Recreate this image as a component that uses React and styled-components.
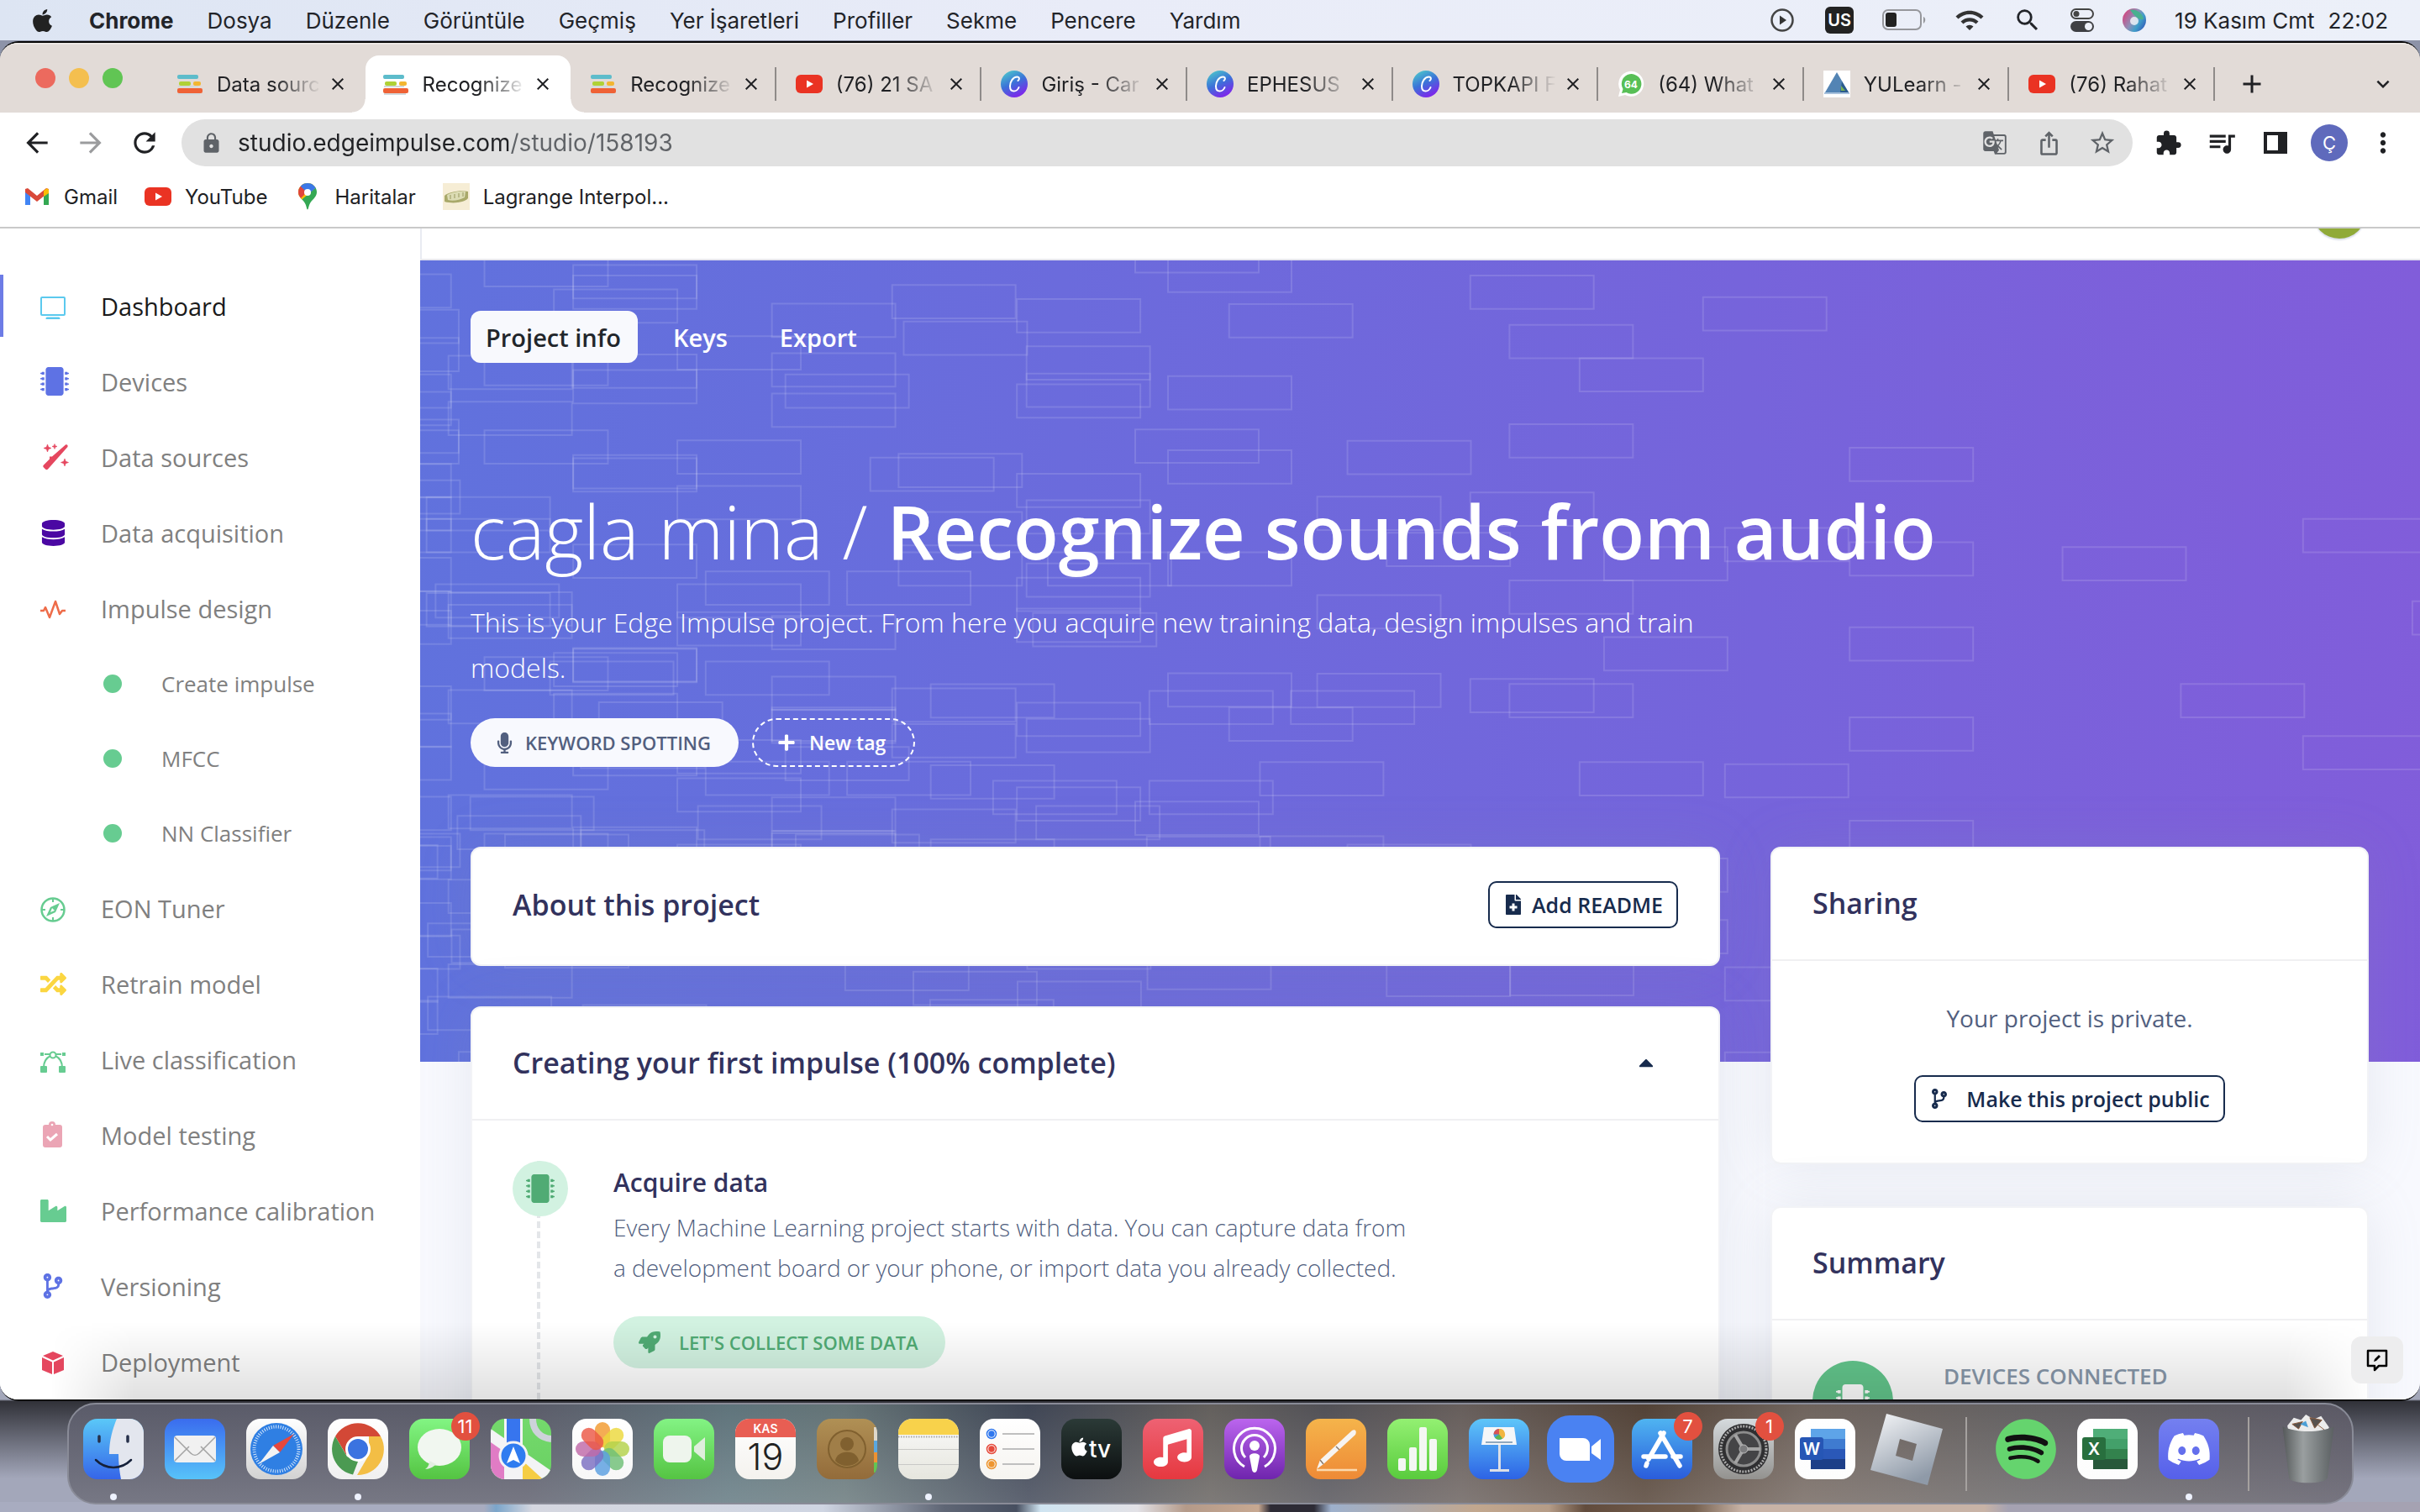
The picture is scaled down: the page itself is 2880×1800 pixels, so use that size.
import React from "react";
import styled, { createGlobalStyle, css } from "styled-components";
import {
  MdArrowBack, MdArrowForward, MdRefresh, MdLock, MdGTranslate, MdIosShare, MdStarOutline,
  MdExtension, MdQueueMusic, MdMoreVert, MdClose, MdAdd, MdKeyboardArrowDown, MdWifi, MdSearch,
} from "react-icons/md";
import {
  FaApple, FaMicrochip, FaDatabase, FaRandom, FaIndustry, FaCodeBranch, FaMicrophone,
  FaPlus, FaFileMedical, FaRocket, FaSpotify, FaDiscord, FaMusic, FaCaretUp,
} from "react-icons/fa";

const systemFont = `Inter, Roboto, "Liberation Sans", sans-serif`;
const appFont = `"Open Sans", "Noto Sans", sans-serif`;

const GlobalStyle = createGlobalStyle`
  *, *::before, *::after { box-sizing: border-box; }
  html, body, #root { height: 100%; }
  body { margin: 0; overflow: hidden; font-family: ${systemFont}; color: #202124; }
  button { font: inherit; color: inherit; border: 0; padding: 0; background: none; }
  a { color: inherit; text-decoration: none; }
  h1, h2, h3, p, ul { margin: 0; padding: 0; }
  svg { display: block; flex: none; }
`;

/* ---------- desktop ---------- */

const Desktop = styled.div`
  height: 100%;
  display: flex;
  flex-direction: column;
  background:
    linear-gradient(90deg, #8d93a8, #8d93a8) 0 0 / 100% 100px no-repeat,
    linear-gradient(180deg, transparent calc(100% - 134px), rgba(20, 20, 24, 0.8) calc(100% - 132px), transparent calc(100% - 40px)),
    #a3a7ba;
`;

const MenuBar = styled.header`
  flex: none;
  height: 48px;
  padding: 0 38px 0 35px;
  display: flex;
  align-items: center;
  justify-content: space-between;
  background: linear-gradient(90deg, #dde5f3, #e9ecf8 45%, #ecf0f9);
  font-size: 26px;
  color: #222429;
`;

const MenuGroup = styled.nav`
  display: flex;
  align-items: center;
  gap: 40px;
`;

const MenuItem = styled.button`
  font-weight: ${(p) => (p.$bold ? 700 : 400)};
`;

const StatusGroup = styled.div`
  display: flex;
  align-items: center;
  gap: 34px;
`;

const InputSource = styled.span`
  width: 34px;
  height: 32px;
  border-radius: 6px;
  background: #222;
  color: #fff;
  font-size: 20px;
  font-weight: 600;
  line-height: 32px;
  text-align: center;
`;

const Clock = styled.time`
  display: flex;
  gap: 16px;
`;

/* ---------- browser window ---------- */

const Window = styled.main`
  flex: 1;
  min-height: 0;
  margin-top: 1px;
  display: flex;
  flex-direction: column;
  border-top: 2px solid #050505;
  border-bottom: 2px solid #111;
  border-radius: 22px;
  overflow: hidden;
  background: #fff;
  position: relative;

  &::after {
    content: "";
    position: absolute;
    left: 60px;
    right: 60px;
    bottom: 0;
    height: 92px;
    pointer-events: none;
    background: linear-gradient(180deg, rgba(0, 0, 0, 0), rgba(0, 0, 0, 0.12));
    mask-image: linear-gradient(90deg, transparent, #000 100px, #000 calc(100% - 100px), transparent);
  }
`;

const TabStrip = styled.div`
  flex: none;
  height: 83px;
  display: flex;
  align-items: flex-end;
  background: #e2dbd7;
  border-top: 2px solid #ece7e4;
`;

const Lights = styled.div`
  flex: none;
  width: 190px;
  height: 68px;
  padding: 15px 0 0 42px;
  display: flex;
  gap: 16px;
`;

const Light = styled.button`
  width: 24px;
  height: 24px;
  border-radius: 50%;
  background: ${(p) => p.$color};
`;

const Tabs = styled.div`
  flex: 0 1 2446px;
  min-width: 0;
  display: flex;
`;

const Tab = styled.div`
  flex: 1 1 0;
  min-width: 0;
  height: 68px;
  padding: 0 21px 0 20px;
  display: flex;
  align-items: center;
  gap: 16px;
  position: relative;
  font-size: 24px;
  ${(p) => p.$separated && css`
    padding: 0 18px 0 23px;
    background: linear-gradient(#8f8b89, #8f8b89) right center / 2px 40px no-repeat;
  `}
  ${(p) => p.$active && css`
    background: #fff;
    border-radius: 16px 16px 0 0;
    &::before, &::after {
      content: "";
      position: absolute;
      bottom: 0;
      width: 16px;
      height: 16px;
    }
    &::before { left: -16px; background: radial-gradient(circle at 0 0, transparent 15px, #fff 16px); }
    &::after { right: -16px; background: radial-gradient(circle at 100% 0, transparent 15px, #fff 16px); }
  `}
`;

const TabTitle = styled.span`
  flex: 1;
  min-width: 0;
  margin-right: -8px;
  white-space: nowrap;
  mask-image: linear-gradient(90deg, #000 55%, transparent);
`;

const IconButton = styled.button`
  flex: none;
  width: ${(p) => p.$width || 64}px;
  display: grid;
  place-items: center;
  color: ${(p) => p.$color || "#202124"};
`;

const StripEnd = styled.div`
  flex: 1 0 auto;
  height: 68px;
  padding: 0 12px;
  display: flex;
  align-items: center;
  justify-content: space-between;
`;

const Toolbar = styled.div`
  flex: none;
  padding: 8px 12px;
  display: flex;
  align-items: center;
`;

const Omnibox = styled.div`
  flex: 1;
  height: 56px;
  margin: 0 10px 0 12px;
  padding: 0 4px 0 22px;
  display: flex;
  align-items: center;
  border-radius: 28px;
  background: #e1e1e1;
`;

const Address = styled.input`
  flex: 1;
  min-width: 0;
  margin-left: 18px;
  padding: 0;
  border: 0;
  outline: 0;
  font-family: ${systemFont};
  font-size: 28px;
  background: linear-gradient(90deg, #202124 322px, #606367 322px);
  background-clip: text;
  -webkit-text-fill-color: transparent;
`;

const Profile = styled.span`
  width: 44px;
  height: 44px;
  border-radius: 50%;
  background: #5f6abc;
  color: #fff;
  font-size: 22px;
  line-height: 44px;
  text-align: center;
`;

const Bookmarks = styled.nav`
  flex: none;
  height: 66px;
  padding: 0 28px 8px;
  display: flex;
  align-items: center;
  gap: 32px;
  border-bottom: 2px solid #c9c9c9;
  font-size: 24px;
`;

const Bookmark = styled.a`
  display: flex;
  align-items: center;
  gap: 16px;
`;

/* ---------- studio page ---------- */

const Studio = styled.div`
  flex: 1;
  min-height: 0;
  display: flex;
  font-family: ${appFont};
  color: #525f7f;
  background: #f8f9fe;
`;

const Sidebar = styled.nav`
  flex: none;
  width: 500px;
  padding-top: 47px;
  overflow: hidden;
  background: #fff;
`;

const NavLink = styled.a`
  height: ${(p) => (p.$sub ? 89 : 90)}px;
  padding-left: ${(p) => (p.$sub ? 123 : 48)}px;
  display: flex;
  align-items: center;
  font-size: ${(p) => (p.$sub ? 26 : 29)}px;
  color: ${(p) => (p.$active ? "#1a1a1a" : "#808080")};
  ${(p) => p.$active && css`
    background: linear-gradient(#6d7ce6, #6d7ce6) 0 center / 4px 74px no-repeat;
  `}
`;

const NavIcon = styled.span`
  width: ${(p) => (p.$sub ? 69 : 72)}px;
  color: ${(p) => p.$color};
`;

const Dot = styled.span`
  display: block;
  width: 22px;
  height: 22px;
  border-radius: 50%;
  background: #67cc91;
`;

const Page = styled.div`
  flex: 1;
  min-width: 0;
  overflow: hidden;
  position: relative;
`;

const TopBar = styled.div`
  height: 38px;
  padding: 0 64px 24px;
  display: flex;
  align-items: flex-end;
  justify-content: flex-end;
  overflow: hidden;
  background: #fff;
  border-left: 2px solid #e9ebf2;
  border-bottom: 2px solid #e7e7ef;
`;

const UserBadge = styled.span`
  flex: none;
  width: 64px;
  height: 64px;
  border-radius: 50%;
  background: #90aa38;
  box-shadow: 0 2px 2px #d8dce8;
`;

const Hero = styled.section`
  height: 954px;
  padding: 60px 60px 0;
  position: relative;
  isolation: isolate;
  color: #fff;
  background: linear-gradient(87deg, #6072dd, #815dda);
`;

const Pattern = styled.svg`
  position: absolute;
  inset: 0;
  z-index: -1;
  width: 100%;
  height: 100%;
`;

const HeroTabs = styled.div`
  display: flex;
  gap: 24px;
`;

const HeroTab = styled.button`
  height: 62px;
  padding: 0 20px 0 18px;
  border-radius: 12px;
  font-size: 29px;
  font-weight: 600;
  ${(p) => p.$active && css`
    background: #f8f9fd;
    color: #22262b;
  `}
`;

const HeroTitle = styled.h1`
  margin-top: 143px;
  font-size: 88px;
  font-weight: 600;
  line-height: 114px;
  white-space: nowrap;
`;

const Owner = styled.span`
  font-weight: 300;
`;

const HeroText = styled.p`
  max-width: 1490px;
  margin-top: 25px;
  font-size: 32px;
  font-weight: 300;
  line-height: 54px;
`;

const Tags = styled.div`
  margin-top: 33px;
  display: flex;
  gap: 16px;
`;

const Tag = styled.button`
  height: 58px;
  padding: 0 33px 0 28px;
  display: flex;
  align-items: center;
  gap: ${(p) => (p.$dashed ? 16 : 12)}px;
  border-radius: 29px;
  font-size: ${(p) => (p.$dashed ? 23 : 22)}px;
  font-weight: 600;
  background: ${(p) => (p.$dashed ? "none" : "#f8f9fe")};
  border: ${(p) => (p.$dashed ? "2px dashed #fff" : "0")};
  color: ${(p) => (p.$dashed ? "#fff" : "#525f7f")};
`;

const Columns = styled.div`
  margin-top: -256px;
  padding: 0 61px 0 60px;
  position: relative;
  display: grid;
  grid-template-columns: minmax(0, 1fr) 712px;
  gap: 60px;
  align-items: start;
`;

const Stack = styled.div`
  display: flex;
  flex-direction: column;
  gap: ${(p) => p.$gap}px;
`;

const Card = styled.section`
  background: #fff;
  border: 2px solid #f2f3f6;
  border-radius: 12px;
  box-shadow: 0 0 64px rgba(136, 152, 170, 0.16);
`;

const CardHeader = styled.header`
  height: ${(p) => (p.$plain ? 138 : 134)}px;
  padding: 0 48px ${(p) => (p.$plain ? 4 : 2)}px;
  display: flex;
  align-items: center;
  justify-content: space-between;
  border-bottom: ${(p) => (p.$plain ? 0 : 2)}px solid #f0f0f2;
`;

const CardTitle = styled.h2`
  font-size: 34px;
  font-weight: 600;
  color: #32325d;
`;

const OutlineButton = styled.button`
  height: 56px;
  padding: 0 16px;
  display: flex;
  align-items: center;
  gap: ${(p) => p.$gap || 10}px;
  border: 2px solid #172b4d;
  border-radius: 10px;
  font-size: 25px;
  font-weight: 600;
  line-height: 34px;
  color: #172b4d;
`;

const Toggle = styled.button`
  margin-right: 24px;
  color: #172b4d;
`;

const Step = styled.div`
  height: 460px;
  padding: 48px 48px 0;
  display: flex;
  gap: 54px;
`;

const Timeline = styled.div`
  width: 66px;
  background: repeating-linear-gradient(180deg, #e4e6e9 0 8px, transparent 8px 12px) 29px 0 / 4px 100% no-repeat;
`;

const StepIcon = styled.span`
  width: 66px;
  height: 66px;
  display: grid;
  place-items: center;
  border-radius: 50%;
  background: #d2f2e1;
  color: #50ab74;
`;

const StepBody = styled.div`
  max-width: 955px;
  padding-top: 6px;
`;

const StepTitle = styled.h3`
  font-size: 30px;
  font-weight: 600;
  line-height: 40px;
  color: #32325d;
`;

const StepText = styled.p`
  margin-top: 9px;
  font-size: 28px;
  font-weight: 300;
  line-height: 48px;
`;

const PillLink = styled.a`
  width: max-content;
  height: 62px;
  margin-top: 34px;
  padding: 0 32px 0 30px;
  display: flex;
  align-items: center;
  gap: 22px;
  border-radius: 31px;
  font-size: 22px;
  font-weight: 600;
  background: #d2f2e1;
  color: #50ab74;
`;

const Sharing = styled.div`
  padding: 44px 48px 48px;
  display: flex;
  flex-direction: column;
  align-items: center;
  gap: 44px;
  font-size: 28px;
  line-height: 48px;
`;

const SummaryRow = styled.div`
  height: 220px;
  padding: 48px;
  display: flex;
  gap: 60px;
`;

const SummaryIcon = styled.span`
  width: 96px;
  height: 96px;
  display: grid;
  place-items: center;
  border-radius: 50%;
  background: #63c68c;
  color: #fff;
`;

const SummaryLabel = styled.h3`
  font-size: 26px;
  font-weight: 600;
  line-height: 36px;
  color: #8898aa;
`;

const Feedback = styled.button`
  position: absolute;
  right: 20px;
  bottom: 19px;
  z-index: 2;
  width: 62px;
  height: 56px;
  display: grid;
  place-items: center;
  border-radius: 12px;
  background: #ededee;
  color: #000;
`;

/* ---------- dock ---------- */

const DockArea = styled.footer`
  flex: none;
  padding: 2px 40px 0;
  display: flex;
  justify-content: center;
  background: linear-gradient(90deg,
    #a8acc0 20%, #7ba5ca 20.5%, #d5d7e0 22%, #cfd5e2 34%, #5f6675 39%, #474f60 42%, #cfe4f1 43%, #e2e1e6 47%,
    #b49a89 49%, #c7a891 52%, #2d2b35 52.5%, #2d2b35 54.3%, #9db0cc 55%, #c2a78e 61%, #b59c87 64%, #624c3d 65.5%,
    #75604f 70%, #c8b3a6 72%, #c8b3a6 82%, #a5a2b2 83%) 0 100% / 100% 12px no-repeat;
`;

const Dock = styled.div`
  height: 121px;
  margin-bottom: 9px;
  padding: 0 16px 0 17px;
  display: flex;
  align-items: center;
  gap: 25px;
  border: 2px solid #898b97;
  border-radius: 34px;
  background:
    linear-gradient(180deg, rgba(0, 0, 0, 0.06), rgba(255, 255, 255, 0.14)),
    linear-gradient(90deg, #606170, #60616f 20%, #657b83 29%, #6a7a7d 34%, #434a5a 42%, #696562 50%, #57565c 55%, #6d6461 61%, #57463a 69%, #766a63 76%, #6a6768 85%, #605e6b);
`;

const DockItem = styled.button`
  flex: none;
  width: 72px;
  height: 116px;
  padding-bottom: 12px;
  position: relative;
  display: flex;
  align-items: center;
  justify-content: center;
  ${(p) => p.$running && css`
    &::after {
      content: "";
      position: absolute;
      left: 32px;
      bottom: 3px;
      width: 8px;
      height: 8px;
      border-radius: 50%;
      background: #eef2ff;
    }
  `}
`;

const DockBadge = styled.span`
  position: absolute;
  top: 8px;
  right: -12px;
  width: 34px;
  height: 34px;
  border-radius: 50%;
  background: #e2503f;
  color: #fff;
  font-size: 22px;
  line-height: 34px;
  text-align: center;
`;

const DockDivider = styled.span`
  width: 2px;
  height: 88px;
  margin: 0 9px;
  background: #a5a19f;
`;

/* ---------- small drawings ---------- */

const ImpulseMark = () => (
  <svg width="32" height="32" viewBox="0 0 32 32">
    <path d="M2 9h22M2 28h26M2 19h24" stroke="#d3d9dc" strokeWidth="2" />
    <rect x="1" y="5" width="25" height="5" rx="2" fill="#5dbccb" />
    <rect x="3" y="13" width="14" height="5" rx="2" fill="#b0d136" />
    <rect x="20" y="13" width="9" height="5" rx="2" fill="#f2b632" />
    <rect x="1" y="21" width="30" height="6" rx="2" fill="#ef6236" />
  </svg>
);

const YouTubeMark = () => (
  <svg width="32" height="32" viewBox="0 0 32 32">
    <rect y="5" width="32" height="22" rx="6" fill="#ea3323" />
    <path d="M13 11.500l8 4.500-8 4.500z" fill="#fff" />
  </svg>
);

const CanvaMark = () => (
  <svg width="32" height="32" viewBox="0 0 32 32">
    <defs>
      <linearGradient id="canva" x1="0" y1="0" x2="0.5" y2="1">
        <stop offset="0.1" stopColor="#4cc3cc" />
        <stop offset="0.55" stopColor="#3b73d8" />
        <stop offset="1" stopColor="#7a2bea" />
      </linearGradient>
    </defs>
    <circle cx="16" cy="16" r="16" fill="url(#canva)" />
    <path d="M20.500 12c2-1 2-4.500-1-4.500-5 0-8.500 6-8.500 11 0 3.500 1.500 6 4.500 6 2.700 0 5-2 6-4.500" fill="none" stroke="#fff" strokeWidth="2" strokeLinecap="round" />
  </svg>
);

const ChatMark = () => (
  <svg width="32" height="32" viewBox="0 0 32 32">
    <path d="M1 31l2-8a15 15 0 1 1 6 6z" fill="#fff" />
    <path d="M5 27l1.500-5a11.800 11.800 0 1 1 4 4z" fill="#58bf56" />
    <text x="16" y="20.500" textAnchor="middle" fontSize="12" fontWeight="700" fill="#fff" fontFamily="Inter">64</text>
  </svg>
);

const LearnMark = () => (
  <svg width="32" height="32" viewBox="0 0 32 32">
    <rect width="32" height="32" fill="#fff" />
    <path d="M16 2l14 24H2z" fill="#5384b4" />
    <path d="M22 13l8 13H20z" fill="#2b5a8d" />
    <path d="M21 18l5 6h-5z" fill="#79b253" />
    <path d="M1 26h30v2H1z" fill="#a8c1dc" />
  </svg>
);

const GmailMark = () => (
  <svg width="32" height="32" viewBox="0 0 32 32">
    <path d="M2 10v16h6V15z" fill="#4285f4" />
    <path d="M30 10v16h-6V15z" fill="#34a853" />
    <path d="M2 7l3-1 11 9 11-9 3 1v4L16 22 2 11z" fill="#d9493a" />
    <path d="M24 9l4-3 2 2v4l-6 4z" fill="#fbbc04" />
  </svg>
);

const MapsMark = () => (
  <svg width="32" height="32" viewBox="0 0 32 32">
    <defs>
      <clipPath id="pin">
        <path d="M16 31.500c-1 0-1-3-2.500-6.500C11.500 20 5 17 5 11a11 11 0 0 1 22 0c0 6-6.500 9-8.500 14-1.500 3.500-1.500 6.500-2.500 6.500z" />
      </clipPath>
    </defs>
    <g clipPath="url(#pin)">
      <rect width="32" height="32" fill="#34a853" />
      <path d="M0 0h32L4 24z" fill="#fbbc04" />
      <path d="M0 0h9l7 10-8 8-8-4z" fill="#e0453a" />
      <path d="M7 0h22v3L17 13 8 4z" fill="#3b78e7" />
    </g>
    <circle cx="16" cy="11" r="4" fill="#fff" />
  </svg>
);

const LagrangeMark = () => (
  <svg width="32" height="32" viewBox="0 0 32 32">
    <rect width="32" height="32" fill="#f6edd5" />
    <path d="M2 15c4-4 18-7 28-5v8c-4 5-18 7-28 4z" fill="#a9a96a" />
    <path d="M5 14c6-3 14-5 22-4l-1 7c-6 3-14 5-20 3z" fill="#dcdcb4" />
    <path d="M9 14v5M14 13v5M19 12v5M24 11v5" stroke="#98985e" />
  </svg>
);

const MonitorIcon = () => (
  <svg width="32" height="32" viewBox="0 0 32 32" fill="none" stroke="currentColor" strokeWidth="2">
    <rect x="1" y="6" width="28" height="21" rx="1" />
    <path d="M8 31h14" strokeWidth="3" strokeLinecap="round" />
  </svg>
);

const WandIcon = () => (
  <svg width="34" height="32" viewBox="0 0 34 32" fill="currentColor">
    <path d="M30 1.500c2-.5 3 .5 2.500 2.500L9 30.500c-1 1-2 1-3 0l-2-2c-1-1-1-2 0-3l7-7v-3h3z" />
    <path d="M8.500 1l1.200 3.300L13 5.500 9.700 6.700 8.500 10 7.300 6.700 4 5.500l3.300-1.200zM17 .5l.8 2.200L20 3.500l-2.200.8L17 6.500l-.8-2.200L14 3.500l2.200-.8zM29 18l1.200 3.300 3.300 1.200-3.300 1.200L29 27l-1.200-3.300-3.300-1.200 3.300-1.200z" stroke="currentColor" strokeWidth="0.600" />
  </svg>
);

const PulseIcon = () => (
  <svg width="32" height="36" viewBox="0 0 32 36" fill="none" stroke="currentColor" strokeWidth="2.500" strokeLinejoin="round">
    <path d="M0 21h4l2-4 5 12L18 10l5 15 3-4h4" />
  </svg>
);

const CompassIcon = () => (
  <svg width="32" height="36" viewBox="0 0 32 36">
    <circle cx="15" cy="20" r="13.500" fill="none" stroke="currentColor" strokeWidth="2.500" />
    <path d="M15 6v5M15 29v5M1 20h5M24 20h5" stroke="currentColor" strokeWidth="2" />
    <path d="M23 12l-5 11-11 5 5-11z" fill="currentColor" />
    <path d="M14 18l3 3-5 2z" fill="#fff" />
  </svg>
);

const CurveIcon = () => (
  <svg width="32" height="36" viewBox="0 0 32 36" fill="none" stroke="currentColor" strokeWidth="2">
    <path d="M4 28c0-8 4-12 8-14M26 28c0-8-4-12-8-14" />
    <circle cx="15" cy="13" r="3.500" />
    <path d="M5 12h6M19 12h6" />
    <g fill="currentColor" stroke="none">
      <rect y="10" width="4" height="4" /><rect x="26" y="10" width="4" height="4" />
      <rect y="26" width="8" height="8" rx="1" /><rect x="22" y="26" width="8" height="8" rx="1" />
    </g>
  </svg>
);

const ClipboardIcon = () => (
  <svg width="29" height="32" viewBox="0 0 29 32">
    <path d="M6 4h4a4 4 0 0 1 8 0h5a3 3 0 0 1 3 3v21a3 3 0 0 1-3 3H6a3 3 0 0 1-3-3V7a3 3 0 0 1 3-3z" fill="currentColor" />
    <circle cx="14" cy="4" r="1.300" fill="#fff" />
    <path d="M8 18l4 4 8-7" fill="none" stroke="#fff" strokeWidth="3" />
  </svg>
);

const BoxIcon = () => (
  <svg width="32" height="36" viewBox="0 0 32 36" fill="currentColor">
    <path d="M15 6l12 5-12 5.500L3 11zM2 13l12 5.500V33L2 28zM28 13l-12 5.500V33l12-5z" />
  </svg>
);

const PanelIcon = () => (
  <svg width="32" height="32" viewBox="0 0 32 32">
    <path d="M2 3h28v26H2zM6 7v18h13V7z" fill="#202124" fillRule="evenodd" />
  </svg>
);

const PlayCircle = () => (
  <svg width="34" height="28" viewBox="0 0 34 28">
    <circle cx="17" cy="14" r="12.500" fill="none" stroke="#444" strokeWidth="2.500" />
    <path d="M14 8.500l8 5.500-8 5.500z" fill="#333" />
  </svg>
);

const BatteryIcon = () => (
  <svg width="52" height="26" viewBox="0 0 52 26">
    <rect x="1" y="1" width="45" height="23" rx="6" fill="none" stroke="#96979c" strokeWidth="2" />
    <rect x="4" y="4" width="13" height="17" rx="3" fill="#222" />
    <path d="M49 9c3 1 3 6 0 8z" fill="#96979c" />
  </svg>
);

const ControlIcon = () => (
  <svg width="28" height="28" viewBox="0 0 28 28">
    <rect x="1" y="1" width="26" height="11" rx="5.500" fill="none" stroke="#444" strokeWidth="2" />
    <circle cx="7" cy="6.500" r="3.500" fill="#444" />
    <rect y="15" width="28" height="13" rx="6.500" fill="#3e3f43" />
    <circle cx="21.500" cy="21.500" r="4.500" fill="#edf0f9" />
  </svg>
);

const SiriIcon = () => (
  <svg width="28" height="28" viewBox="0 0 28 28">
    <defs>
      <linearGradient id="siri" x1="0" y1="0.2" x2="1" y2="0.8">
        <stop offset="0" stopColor="#d8407c" />
        <stop offset="0.45" stopColor="#8e8fb8" />
        <stop offset="0.7" stopColor="#3f9ec9" />
        <stop offset="1" stopColor="#3356b8" />
      </linearGradient>
    </defs>
    <circle cx="14" cy="14" r="14" fill="url(#siri)" />
    <path d="M9 2c7-2 15 4 16 11-5 1-10-3-16-11z" fill="#49b08f" />
    <circle cx="14" cy="15" r="5" fill="#fff" opacity="0.75" />
  </svg>
);

const FeedbackIcon = () => (
  <svg width="28" height="28" viewBox="0 0 28 28">
    <path d="M3 3h22v18h-9l-5 5v-5H3z" fill="none" stroke="#000" strokeWidth="2.500" strokeLinejoin="round" />
    <path d="M10 16l1-3 5-5 2 2-5 5z" fill="#000" />
  </svg>
);

/* Outlined blocks scattered across the hero, listed on the pattern's own grid. */
const blocks = [
  [100, 44], [238, 73], [238, 99], [208, 133], [-144, 96], [-132, 183], [-132, 252], [44, 296], [100, 287], [238, 293],
  [238, 331], [-144, 342], [-144, 385], [44, 409], [-132, 453], [-132, 479], [100, 479], [-144, 562], [238, 540], [238, 548],
  [400, 504], [400, 616], [-130, 602], [-144, 643], [10, 643], [-144, 697], [400, 248], [547, 168], [547, 290], [568, 342],
  [547, 389], [734, 122], [752, 212], [928, 157], [943, 273], [943, 340], [928, 366], [1112, 10], [1163, 58], [1258, 169],
  [1163, 346], [1112, 477], [1163, 528], [1442, 505], [744, 537], [700, 546], [928, 586], [943, 651], [1395, 642], [1503, 731],
  [744, 680], [744, 779], [976, 779], [1163, 779], [943, 806], [928, 841], [928, 917], [953, 928], [664, 826], [444, 826],
  [400, 857], [238, 760], [10, 697], [-144, 792], [24, 857], [10, 879], [44, 877], [-144, 875], [44, 908], [547, 935],
  [400, 926], [-144, 922], [208, 1026], [238, 1014], [238, 1016], [100, 1036], [202, 1047], [444, 1047], [547, 1084],
  [-144, 1108], [44, 1117], [208, 1126], [278, 1147], [-144, 1175], [-144, 1256], [547, 1160], [547, 1165], [734, 1113],
  [794, 1103], [734, 1201], [928, 1148], [943, 1188], [1163, 1076], [1134, 1119], [1354, 1119], [1395, 1077], [1258, 1160],
  [1395, 884], [1306, 1294], [250, 1227], [238, 1245], [100, 1279], [400, 1240], [400, 1334], [444, 1293], [568, 1257],
  [664, 1293], [547, 1381], [734, 1410], [794, 1302], [891, 1340], [928, 1356], [1134, 1340], [958, 1402], [1112, 1391],
  [432, 1402], [44, 1375], [78, 1379], [58, 1426], [250, 1461], [238, 1454], [100, 1470], [132, 1472], [-130, 1470],
  [-144, 1478], [-144, 1379], [547, 1464], [584, 1472], [400, 1497], [794, 1484], [1130, 1477], [1306, 1476], [1442, 1497],
  [547, 1469], [1633, 99], [1995, 152], [1694, 220], [1803, 302], [1694, 464], [2223, 522], [1633, 632], [2029, 719],
  [2223, 754], [1841, 766], [2928, 697], [2554, 766], [1694, 848], [3098, 899], [1841, 987], [2223, 963], [1633, 1090],
  [1694, 1102], [2738, 1102], [2223, 1184], [2928, 1230], [1803, 1294], [2029, 1299], [2223, 1438], [1841, 1531],
  [44, 1583], [-144, 1640], [12, 1690], [49, 1705], [44, 1791], [-165, 1801], [12, 1870], [-165, 1880], [661, 1773],
  [767, 1809], [944, 1720], [1131, 1770], [929, 1833], [1503, 1787], [1695, 1785], [2029, 1798], [2029, 2007], [793, 1878],
  [253, 1891], [1841, 1682], [132, 1717], [-144, 1500], [-165, 1498], [60, 2006], [-130, 1720],
];

const HeroPattern = () => (
  <Pattern aria-hidden="true">
    <g transform="translate(0 -30) scale(0.7653 0.4847)" fill="none" stroke="#fff" strokeOpacity="0.13" strokeWidth="2">
      {blocks.map(([x, y], i) => (
        <rect key={i} x={x} y={y} width="192" height="82" vectorEffect="non-scaling-stroke" />
      ))}
    </g>
  </Pattern>
);

/* ---------- dock icons ---------- */

const Tile = ({ id, from, to, children }) => (
  <svg width="72" height="72" viewBox="0 0 72 72">
    <defs>
      <linearGradient id={id} x1="0" y1="0" x2="0" y2="1">
        <stop offset="0" stopColor={from} />
        <stop offset="1" stopColor={to} />
      </linearGradient>
      <clipPath id={`${id}-clip`}><rect width="72" height="72" rx="17" /></clipPath>
    </defs>
    <g clipPath={`url(#${id}-clip)`}>
      <rect width="72" height="72" fill={`url(#${id})`} />
      {children}
    </g>
  </svg>
);

const Finder = () => (
  <Tile id="finder" from="#5ac8f8" to="#3565e8">
    <path d="M40 0h32v72H45c-2-10-3-20-3-30H31C31 26 35 12 40 0z" fill="#e3e6ee" />
    <path d="M19 21v6M53 21v6" stroke="#26304a" strokeWidth="3.500" strokeLinecap="round" />
    <path d="M15 49c12 12 30 12 42 0" fill="none" stroke="#16213a" strokeWidth="2.500" strokeLinecap="round" />
  </Tile>
);
const Mail = () => (
  <Tile id="mail" from="#3a6cee" to="#57c3f9">
    <rect x="11" y="20" width="50" height="32" rx="4" fill="#f1f1f1" />
    <path d="M12 50l17-17M60 50L43 33M12 22l19 19c3 3 7 3 10 0l19-19" fill="none" stroke="#a2a2a2" strokeWidth="1.500" />
  </Tile>
);
const Safari = () => (
  <Tile id="safari" from="#ffffff" to="#d2d2d2">
    <circle cx="36" cy="36" r="31" fill="#2f7fe3" />
    <circle cx="36" cy="36" r="26.500" fill="none" stroke="#d7e8fb" strokeWidth="4" strokeDasharray="1 1.800" />
    <path d="M57 18L40 40l-8-8z" fill="#e6473c" />
    <path d="M15 54l17-22 8 8z" fill="#f3f3f3" />
  </Tile>
);
const Chrome = () => (
  <Tile id="chrome" from="#ffffff" to="#f0f0f0">
    <path d="M9 21a31 31 0 0 1 54 0H36L22 43z" fill="#d34836" />
    <path d="M9 21l14 24 13 6-6 15.500A31 31 0 0 1 9 21z" fill="#4b9a52" />
    <path d="M63 21a31 31 0 0 1-28 46l14-24V21z" fill="#f3be45" />
    <circle cx="36" cy="36" r="15" fill="#fff" />
    <circle cx="36" cy="36" r="12" fill="#3b73e0" />
  </Tile>
);
const Messages = () => (
  <Tile id="messages" from="#82f583" to="#54c442">
    <ellipse cx="36" cy="34" rx="26" ry="22" fill="#f1f7f0" />
    <path d="M24 50c0 5-2 8-5 10 6 0 10-3 13-6z" fill="#e3eee2" />
  </Tile>
);
const Maps = () => (
  <Tile id="maps" from="#74d96c" to="#6ad163">
    <path d="M0 12l72 50v10H0z" fill="#f3f3f5" />
    <path d="M0 28l20 14v30H0z" fill="#e07cc5" />
    <path d="M38 50l24 22H38z" fill="#f5cd45" />
    <rect x="16" width="22" height="72" fill="#f3f3f5" />
    <rect x="19" width="16" height="40" fill="#3775ee" />
    <path d="M50 0c0 14 9 23 22 24" fill="none" stroke="#cdd2d9" strokeWidth="8" />
    <circle cx="27" cy="44" r="16" fill="#2f7cf0" stroke="#f3f3f5" strokeWidth="3" />
    <path d="M27 33l8 20-8-4-8 4z" fill="#fff" />
  </Tile>
);
const petals = ["#f29a2e", "#ecd83c", "#b3d24a", "#6fbf76", "#5a9fe0", "#7b6fc2", "#c069a8", "#ec5846"];
const Photos = () => (
  <Tile id="photos" from="#ffffff" to="#f7f7f7">
    {petals.map((c, i) => (
      <rect key={c} x="27" y="4" width="18" height="30" rx="9" fill={c} opacity="0.82" transform={`rotate(${i * 45} 36 36)`} />
    ))}
  </Tile>
);
const FaceTime = () => (
  <Tile id="facetime" from="#83f384" to="#55c443">
    <rect x="11" y="20" width="34" height="32" rx="8" fill="#eef5ed" />
    <path d="M48 33l13-11v28L48 39z" fill="#dfeedd" />
  </Tile>
);
const Calendar = () => (
  <Tile id="calendar" from="#ffffff" to="#f4f2ee">
    <rect width="72" height="22" fill="#e85e53" />
    <text x="36" y="17" textAnchor="middle" fontSize="14" fontWeight="600" fill="#fff" fontFamily="Inter">KAS</text>
    <text x="36" y="61" textAnchor="middle" fontSize="43" fontWeight="300" fill="#222" fontFamily="Inter">19</text>
  </Tile>
);
const Contacts = () => (
  <Tile id="contacts" from="#b09055" to="#936b3a">
    <path d="M68 10h4v16h-4z" fill="#ded8cc" />
    <path d="M68 26h4v14h-4z" fill="#5aa7df" />
    <path d="M68 40h4v12h-4z" fill="#ee9232" />
    <path d="M68 52h4v12h-4z" fill="#62c554" />
    <circle cx="36" cy="36" r="22" fill="#a07e48" stroke="#80602f" strokeWidth="2" />
    <circle cx="36" cy="30" r="8" fill="#80602f" />
    <path d="M22 50c2-14 26-14 28 0-7 8-21 8-28 0z" fill="#80602f" />
  </Tile>
);
const Notes = () => (
  <Tile id="notes" from="#fafafa" to="#e6e6de">
    <rect width="72" height="19" fill="#f8d24b" />
    <path d="M0 21.500h72" stroke="#aaa" strokeDasharray="1.500 1.500" strokeWidth="2" />
    <path d="M0 36.500h72M0 54.500h72" stroke="#c9c9c6" />
  </Tile>
);
const Reminders = () => (
  <Tile id="reminders" from="#ffffff" to="#f6f4f0">
    {["#2f77ee", "#e64a3c", "#ee9530"].map((c, i) => (
      <g key={c}>
        <circle cx="14" cy={18 + i * 18} r="5.500" fill="none" stroke={c} strokeWidth="1.500" />
        <circle cx="14" cy={18 + i * 18} r="3.700" fill={c} />
        <path d={`M27 ${18 + i * 18}h38`} stroke="#bfbfbf" strokeWidth="2" />
      </g>
    ))}
  </Tile>
);
const AppleTv = () => (
  <Tile id="appletv" from="#2b3a37" to="#0c0f10">
    <FaApple x="9" y="21" size="25" color="#fff" />
    <text x="33" y="46" fontSize="28" fontWeight="500" fill="#fff" fontFamily="Inter">tv</text>
  </Tile>
);
const Music = () => (
  <Tile id="music" from="#ee6273" to="#e6383f">
    <FaMusic x="13" y="12" size="45" color="#fff" />
  </Tile>
);
const Podcasts = () => (
  <Tile id="podcasts" from="#bb65ee" to="#6f25ad">
    <g fill="none" stroke="#fff" strokeWidth="3">
      <path d="M24 57a24.500 24.500 0 1 1 24 0" />
      <path d="M25 46a15.500 15.500 0 1 1 22 0" />
    </g>
    <circle cx="36" cy="32" r="6" fill="#fff" />
    <path d="M30 45c0-5 12-5 12 0l-3 16c-1 4-5 4-6 0z" fill="#fff" />
  </Tile>
);
const Pages = () => (
  <Tile id="pages" from="#f5b44b" to="#ee8a36">
    <path d="M13 60l4-11L55 14c4-2 6 1 4 5L21 54z" fill="#f7f4f1" />
    <path d="M17 49l4 5M36 33l4 4" stroke="#8b7a6b" strokeWidth="1.500" />
    <path d="M13 61h48" stroke="#fbd9ae" strokeWidth="2.500" />
  </Tile>
);
const Numbers = () => (
  <Tile id="numbers" from="#93f072" to="#59cb3d">
    <g fill="#f4f7f3">
      <rect x="13" y="47" width="9" height="15" rx="2" /><rect x="26" y="34" width="9" height="28" rx="2" />
      <rect x="38" y="10" width="9" height="52" rx="2" /><rect x="50" y="24" width="9" height="38" rx="2" />
    </g>
  </Tile>
);
const Keynote = () => (
  <Tile id="keynote" from="#5ec6f9" to="#2d63e5">
    <path d="M35 30h3v32h-3zM25 60h23v3H25z" fill="#dcdfe6" />
    <path d="M18 10h36l3 21H15z" fill="#f5f6f8" />
    <path d="M20 28h32" stroke="#6f8fab" strokeWidth="1.500" />
    <circle cx="36" cy="18.500" r="6.500" fill="#3fa0dd" />
    <path d="M36 12a6.500 6.500 0 0 1 4 12l-4-5.500z" fill="#f1b53f" />
    <path d="M36 18.500l4 5a6.500 6.500 0 0 1-9-1z" fill="#5fb84e" />
    <path d="M36 12v6.500h-6.500A6.500 6.500 0 0 1 36 12z" fill="#d95454" />
  </Tile>
);
const Zoom = () => (
  <svg width="80" height="80" viewBox="0 0 80 80">
    <rect width="80" height="80" rx="27" fill="#4a82f2" />
    <path d="M15 27h28a8 8 0 0 1 8 8v19H23a8 8 0 0 1-8-8zM53 37l11-9v25l-11-8z" fill="#fff" />
  </svg>
);
const AppStore = () => (
  <Tile id="appstore" from="#4fb4f1" to="#2a5cdb">
    <g stroke="#fff" strokeWidth="5.500" strokeLinecap="round">
      <path d="M38 17L20 48M34 17l23 39M14 45h26M49 45h9M18 53l-1 3" />
    </g>
  </Tile>
);
const Settings = () => (
  <Tile id="settings" from="#d5dadd" to="#93928f">
    <circle cx="36" cy="36" r="30" fill="#2f2f31" />
    <circle cx="36" cy="36" r="27" fill="none" stroke="#aaa" strokeWidth="3" strokeDasharray="2 1.500" />
    <circle cx="36" cy="36" r="20" fill="#444446" stroke="#8c8c8c" strokeWidth="3" />
    <path d="M36 36h20M36 36L26 19M36 36L26 53" stroke="#a3a3a3" strokeWidth="4" />
    <circle cx="36" cy="36" r="5" fill="#7c7c7e" stroke="#bbb" />
  </Tile>
);
const Office = ({ id, letter, shades, front }) => (
  <Tile id={id} from="#ffffff" to="#fdfdfd">
    {shades.map((c, i) => <rect key={c} x="19" y={12 + i * 12} width="41" height="12" fill={c} />)}
    <rect x="6" y="22" width="28" height="27" rx="3" fill={front} />
    <text x="20" y="43" textAnchor="middle" fontSize="20" fontWeight="600" fill="#fff" fontFamily="Inter">{letter}</text>
  </Tile>
);
const Roblox = () => (
  <svg width="88" height="88" viewBox="0 0 88 88">
    <defs>
      <linearGradient id="roblox" x1="0" y1="0" x2="0.5" y2="1">
        <stop offset="0" stopColor="#f6f7f9" /><stop offset="1" stopColor="#8f9aa8" />
      </linearGradient>
    </defs>
    <path fillRule="evenodd" d="M20 2l67 18-18 67L1 69zM36 32l-5 20 20 6 5-20z" fill="url(#roblox)" />
  </svg>
);
const Spotify = () => (
  <svg width="74" height="74" viewBox="0 0 74 74">
    <circle cx="37" cy="37" r="34" fill="#111" />
    <FaSpotify size="74" color="#65d46e" />
  </svg>
);
const Discord = () => (
  <Tile id="discord" from="#7480f0" to="#5660ea">
    <FaDiscord x="9" y="9" size="54" color="#fff" />
  </Tile>
);
const Trash = () => (
  <svg width="66" height="86" viewBox="0 0 68 90">
    <defs>
      <linearGradient id="trash" x1="0" x2="1">
        <stop offset="0" stopColor="#55595a" /><stop offset="0.4" stopColor="#9a9fa0" /><stop offset="1" stopColor="#5b6062" />
      </linearGradient>
    </defs>
    <path d="M8 16l8-10 9 3 6-7 10 6 9-4 10 14-4 9H10z" fill="#ececec" />
    <path d="M14 14l8 6 5-9zM36 6l6 13 9-10zM46 15l8 6" fill="#57524f" stroke="#8b5a3c" />
    <path d="M24 14l7-4 3 8z" fill="#4c9fd6" />
    <path d="M2 17c18 8 46 8 64 0l-8 64c-2 8-46 8-48 0z" fill="url(#trash)" />
  </svg>
);

/* ---------- data ---------- */

const menus = ["Dosya", "Düzenle", "Görüntüle", "Geçmiş", "Yer İşaretleri", "Profiller", "Sekme", "Pencere", "Yardım"];

const tabs = [
  { icon: ImpulseMark, title: "Data sourc" },
  { icon: ImpulseMark, title: "Recognize", active: true },
  { icon: ImpulseMark, title: "Recognize", separated: true },
  { icon: YouTubeMark, title: "(76) 21 SA", separated: true },
  { icon: CanvaMark, title: "Giriş - Car", separated: true },
  { icon: CanvaMark, title: "EPHESUS", separated: true },
  { icon: CanvaMark, title: "TOPKAPI F", separated: true },
  { icon: ChatMark, title: "(64) What", separated: true },
  { icon: LearnMark, title: "YULearn -", separated: true },
  { icon: YouTubeMark, title: "(76) Rahat", separated: true },
];

const bookmarks = [
  [GmailMark, "Gmail"], [YouTubeMark, "YouTube"], [MapsMark, "Haritalar"], [LagrangeMark, "Lagrange Interpol..."],
];

const fa = (Icon, size = 32) => <Icon size={size} />;

const navigation = [
  { label: "Dashboard", color: "#5bc9ee", icon: <MonitorIcon />, active: true },
  { label: "Devices", color: "#5e72e4", icon: fa(FaMicrochip, 34) },
  { label: "Data sources", color: "#e5475f", icon: <WandIcon /> },
  { label: "Data acquisition", color: "#4b08a3", icon: fa(FaDatabase, 31) },
  { label: "Impulse design", color: "#ee6c49", icon: <PulseIcon /> },
  { label: "Create impulse", sub: true },
  { label: "MFCC", sub: true },
  { label: "NN Classifier", sub: true },
  { label: "EON Tuner", color: "#67cc91", icon: <CompassIcon /> },
  { label: "Retrain model", color: "#fbd641", icon: fa(FaRandom, 31) },
  { label: "Live classification", color: "#67cc91", icon: <CurveIcon /> },
  { label: "Model testing", color: "#eba5b5", icon: <ClipboardIcon /> },
  { label: "Performance calibration", color: "#67cc91", icon: fa(FaIndustry, 31) },
  { label: "Versioning", color: "#5e72e4", icon: fa(FaCodeBranch, 30) },
  { label: "Deployment", color: "#e5475f", icon: <BoxIcon /> },
];

const dock = [
  { name: "Finder", icon: <Finder />, running: true },
  { name: "Mail", icon: <Mail /> },
  { name: "Safari", icon: <Safari /> },
  { name: "Chrome", icon: <Chrome />, running: true },
  { name: "Messages", icon: <Messages />, badge: "11" },
  { name: "Maps", icon: <Maps /> },
  { name: "Photos", icon: <Photos /> },
  { name: "FaceTime", icon: <FaceTime /> },
  { name: "Calendar", icon: <Calendar /> },
  { name: "Contacts", icon: <Contacts /> },
  { name: "Notes", icon: <Notes />, running: true },
  { name: "Reminders", icon: <Reminders /> },
  { name: "TV", icon: <AppleTv /> },
  { name: "Music", icon: <Music /> },
  { name: "Podcasts", icon: <Podcasts /> },
  { name: "Pages", icon: <Pages /> },
  { name: "Numbers", icon: <Numbers /> },
  { name: "Keynote", icon: <Keynote /> },
  { name: "Zoom", icon: <Zoom /> },
  { name: "App Store", icon: <AppStore />, badge: "7" },
  { name: "Settings", icon: <Settings />, badge: "1" },
  { name: "Word", icon: <Office id="word" letter="W" front="#2656b5" shades={["#5ea4e8", "#3f7bd0", "#2a58b8", "#1d3f88"]} /> },
  { name: "Roblox", icon: <Roblox /> },
  { divider: true, name: "apps" },
  { name: "Spotify", icon: <Spotify /> },
  { name: "Excel", icon: <Office id="excel" letter="X" front="#286f3e" shades={["#4fae78", "#43a06a", "#33824d", "#27583a"]} /> },
  { name: "Discord", icon: <Discord />, running: true },
  { divider: true, name: "recent" },
  { name: "Trash", icon: <Trash /> },
];

/* ---------- page ---------- */

export default function App() {
  return (
    <Desktop>
      <GlobalStyle />
      <MenuBar>
        <MenuGroup>
          <FaApple size={31} color="#222" />
          <MenuItem $bold>Chrome</MenuItem>
          {menus.map((m) => <MenuItem key={m}>{m}</MenuItem>)}
        </MenuGroup>
        <StatusGroup>
          <PlayCircle />
          <InputSource>US</InputSource>
          <BatteryIcon />
          <MdWifi size={36} color="#333" />
          <MdSearch size={34} />
          <ControlIcon />
          <SiriIcon />
          <Clock><span>19 Kasım Cmt</span><span>22:02</span></Clock>
        </StatusGroup>
      </MenuBar>

      <Window>
        <TabStrip>
          <Lights>
            <Light $color="#ec6a5e" aria-label="Close window" />
            <Light $color="#f4bf4f" aria-label="Minimise window" />
            <Light $color="#61c554" aria-label="Zoom window" />
          </Lights>
          <Tabs role="tablist">
            {tabs.map(({ icon: Icon, title, active, separated }, i) => (
              <Tab key={i} role="tab" aria-selected={!!active} $active={active} $separated={separated}>
                <Icon />
                <TabTitle>{title}</TabTitle>
                <IconButton $width={24} aria-label="Close tab"><MdClose size={24} /></IconButton>
              </Tab>
            ))}
          </Tabs>
          <StripEnd>
            <IconButton aria-label="New tab"><MdAdd size={36} /></IconButton>
            <IconButton aria-label="Search tabs"><MdKeyboardArrowDown size={30} /></IconButton>
          </StripEnd>
        </TabStrip>

        <Toolbar>
          <IconButton aria-label="Back"><MdArrowBack size={38} /></IconButton>
          <IconButton aria-label="Forward" $color="#9b9c9e"><MdArrowForward size={38} /></IconButton>
          <IconButton aria-label="Reload"><MdRefresh size={38} /></IconButton>
          <Omnibox>
            <MdLock size={27} color="#5f6368" />
            <Address aria-label="Address" defaultValue="studio.edgeimpulse.com/studio/158193" />
            <IconButton aria-label="Translate" $color="#5f6368"><MdGTranslate size={30} /></IconButton>
            <IconButton aria-label="Share" $color="#5f6368"><MdIosShare size={31} /></IconButton>
            <IconButton aria-label="Bookmark" $color="#5f6368"><MdStarOutline size={34} /></IconButton>
          </Omnibox>
          <IconButton aria-label="Extensions"><MdExtension size={33} /></IconButton>
          <IconButton aria-label="Media"><MdQueueMusic size={38} /></IconButton>
          <IconButton aria-label="Side panel"><PanelIcon /></IconButton>
          <IconButton aria-label="Profile"><Profile>Ç</Profile></IconButton>
          <IconButton aria-label="Menu"><MdMoreVert size={38} /></IconButton>
        </Toolbar>

        <Bookmarks>
          {bookmarks.map(([Icon, label]) => (
            <Bookmark key={label} href="#"><Icon />{label}</Bookmark>
          ))}
        </Bookmarks>

        <Studio>
          <Sidebar>
            {navigation.map((n) => (
              <NavLink key={n.label} href="#" $sub={n.sub} $active={n.active}>
                <NavIcon $sub={n.sub} $color={n.color}>{n.sub ? <Dot /> : n.icon}</NavIcon>
                {n.label}
              </NavLink>
            ))}
          </Sidebar>

          <Page>
            <TopBar><UserBadge /></TopBar>
            <Hero>
              <HeroPattern />
              <HeroTabs>
                <HeroTab $active>Project info</HeroTab>
                <HeroTab>Keys</HeroTab>
                <HeroTab>Export</HeroTab>
              </HeroTabs>
              <HeroTitle><Owner>cagla mina / </Owner>Recognize sounds from audio</HeroTitle>
              <HeroText>
                This is your Edge Impulse project. From here you acquire new training data, design impulses and train models.
              </HeroText>
              <Tags>
                <Tag><FaMicrophone size={25} />KEYWORD SPOTTING</Tag>
                <Tag $dashed><FaPlus size={22} />New tag</Tag>
              </Tags>
            </Hero>

            <Columns>
              <Stack $gap={48}>
                <Card>
                  <CardHeader $plain>
                    <CardTitle>About this project</CardTitle>
                    <OutlineButton><FaFileMedical size={24} />Add README</OutlineButton>
                  </CardHeader>
                </Card>
                <Card>
                  <CardHeader>
                    <CardTitle>Creating your first impulse (100% complete)</CardTitle>
                    <Toggle aria-label="Collapse"><FaCaretUp size={28} /></Toggle>
                  </CardHeader>
                  <Step>
                    <Timeline><StepIcon><FaMicrochip size={34} /></StepIcon></Timeline>
                    <StepBody>
                      <StepTitle>Acquire data</StepTitle>
                      <StepText>
                        Every Machine Learning project starts with data. You can capture data from a development board or your
                        phone, or import data you already collected.
                      </StepText>
                      <PillLink href="#"><FaRocket size={26} />LET'S COLLECT SOME DATA</PillLink>
                    </StepBody>
                  </Step>
                </Card>
              </Stack>

              <Stack $gap={50}>
                <Card>
                  <CardHeader><CardTitle>Sharing</CardTitle></CardHeader>
                  <Sharing>
                    <p>Your project is private.</p>
                    <OutlineButton $gap={20}><FaCodeBranch size={24} />Make this project public</OutlineButton>
                  </Sharing>
                </Card>
                <Card>
                  <CardHeader><CardTitle>Summary</CardTitle></CardHeader>
                  <SummaryRow>
                    <SummaryIcon><FaMicrochip size={40} /></SummaryIcon>
                    <SummaryLabel>DEVICES CONNECTED</SummaryLabel>
                  </SummaryRow>
                </Card>
              </Stack>
            </Columns>
            <Feedback aria-label="Send feedback"><FeedbackIcon /></Feedback>
          </Page>
        </Studio>
      </Window>

      <DockArea>
        <Dock>
          {dock.map((d) => d.divider ? <DockDivider key={d.name} /> : (
            <DockItem key={d.name} aria-label={d.name} $running={d.running}>
              {d.icon}
              {d.badge && <DockBadge>{d.badge}</DockBadge>}
            </DockItem>
          ))}
        </Dock>
      </DockArea>
    </Desktop>
  );
}
